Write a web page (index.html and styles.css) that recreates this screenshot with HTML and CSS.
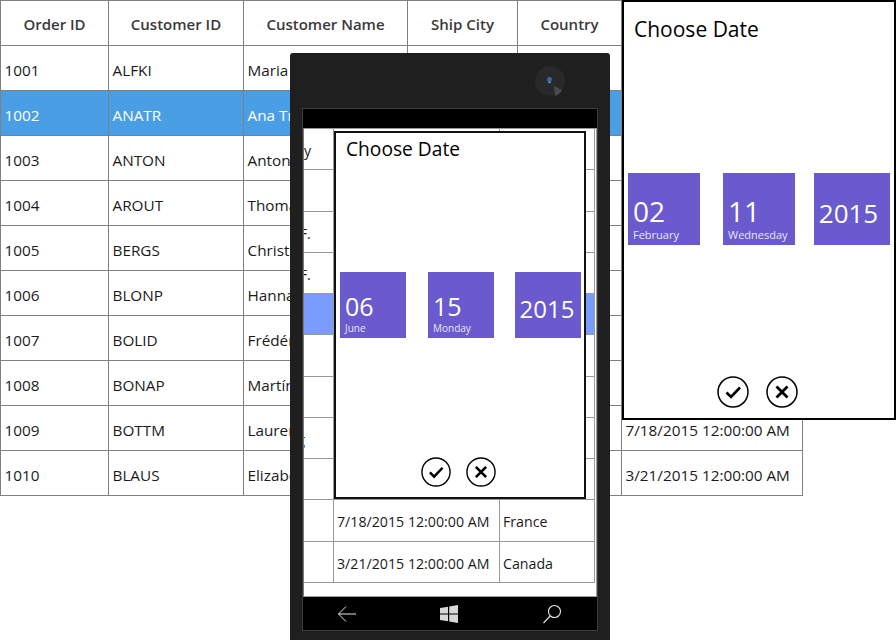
FILE: index.html
```html
<!DOCTYPE html>
<html lang="en">
<head>
<meta charset="utf-8">
<title>Choose Date</title>
<link rel="stylesheet" href="styles.css">
</head>
<body>
<svg class="defs" width="0" height="0" aria-hidden="true">
  <symbol id="ok" viewBox="0 0 32 32"><circle cx="16" cy="16" r="15" fill="#fff" stroke="#000" stroke-width="1.5"/><path d="M9.5 16.5 14 21 23 11.5" fill="none" stroke="#000" stroke-width="2.6"/></symbol>
  <symbol id="no" viewBox="0 0 32 32"><circle cx="16" cy="16" r="15" fill="#fff" stroke="#000" stroke-width="1.5"/><path d="M10.5 10.5 21.5 21.5M21.5 10.5 10.5 21.5" fill="none" stroke="#000" stroke-width="2.8"/></symbol>
</svg>

<main class="grid">
  <div class="row head"><div class="cell">Order ID</div><div class="cell">Customer ID</div><div class="cell">Customer Name</div><div class="cell">Ship City</div><div class="cell">Country</div><div class="cell"></div></div>
  <div class="row"><div class="cell">1001</div><div class="cell">ALFKI</div><div class="cell">Maria Anders</div><div class="cell"></div><div class="cell"></div><div class="cell"></div></div>
  <div class="row selected"><div class="cell">1002</div><div class="cell">ANATR</div><div class="cell">Ana Trujillo</div><div class="cell"></div><div class="cell"></div><div class="cell"></div></div>
  <div class="row"><div class="cell">1003</div><div class="cell">ANTON</div><div class="cell">Antonio Moreno</div><div class="cell"></div><div class="cell"></div><div class="cell"></div></div>
  <div class="row"><div class="cell">1004</div><div class="cell">AROUT</div><div class="cell">Thomas Hardy</div><div class="cell"></div><div class="cell"></div><div class="cell"></div></div>
  <div class="row"><div class="cell">1005</div><div class="cell">BERGS</div><div class="cell">Christina Berglund</div><div class="cell"></div><div class="cell"></div><div class="cell"></div></div>
  <div class="row"><div class="cell">1006</div><div class="cell">BLONP</div><div class="cell">Hanna Moos</div><div class="cell"></div><div class="cell"></div><div class="cell"></div></div>
  <div class="row"><div class="cell">1007</div><div class="cell">BOLID</div><div class="cell">Frédérique Citeaux</div><div class="cell"></div><div class="cell"></div><div class="cell"></div></div>
  <div class="row"><div class="cell">1008</div><div class="cell">BONAP</div><div class="cell">Martín Sommer</div><div class="cell"></div><div class="cell"></div><div class="cell"></div></div>
  <div class="row"><div class="cell">1009</div><div class="cell">BOTTM</div><div class="cell">Laurence Lebihan</div><div class="cell"></div><div class="cell"></div><div class="cell">7/18/2015 12:00:00 AM</div></div>
  <div class="row"><div class="cell">1010</div><div class="cell">BLAUS</div><div class="cell">Elizabeth Lincoln</div><div class="cell"></div><div class="cell"></div><div class="cell">3/21/2015 12:00:00 AM</div></div>
</main>

<aside class="phone">
  <div class="bezel">
    <svg class="camera" width="32" height="32" viewBox="0 0 32 32" aria-hidden="true">
      <circle cx="16" cy="16" r="15" fill="#29292c"/>
      <path d="M28 25 20 21 21 31C24 30 27 28 28 25Z" fill="#4a4a4e"/>
      <circle cx="15.5" cy="14.5" r="2.4" fill="#4a62a8"/>
      <rect x="14" y="16.6" width="3" height="1.5" fill="#1aa6a6"/>
    </svg>
  </div>
  <div class="screen">
    <div class="status"></div>
    <div class="viewport">
      <div class="pgrid">
        <div class="prow phead"><div class="pcell">Ship City</div><div class="pcell"></div><div class="pcell"></div></div>
        <div class="prow"><div class="pcell">Berlin</div><div class="pcell"></div><div class="pcell"></div></div>
        <div class="prow"><div class="pcell">México D.F.</div><div class="pcell"></div><div class="pcell"></div></div>
        <div class="prow"><div class="pcell">México D.F.</div><div class="pcell"></div><div class="pcell"></div></div>
        <div class="prow pselected"><div class="pcell">London</div><div class="pcell"></div><div class="pcell"></div></div>
        <div class="prow"><div class="pcell">Luleå</div><div class="pcell"></div><div class="pcell"></div></div>
        <div class="prow"><div class="pcell tight">Mannheim</div><div class="pcell"></div><div class="pcell"></div></div>
        <div class="prow"><div class="pcell tight">Strasbourg</div><div class="pcell"></div><div class="pcell"></div></div>
        <div class="prow"><div class="pcell">Madrid</div><div class="pcell"></div><div class="pcell"></div></div>
        <div class="prow"><div class="pcell">Marseille</div><div class="pcell">7/18/2015 12:00:00 AM</div><div class="pcell">France</div></div>
        <div class="prow"><div class="pcell">Montréal</div><div class="pcell">3/21/2015 12:00:00 AM</div><div class="pcell">Canada</div></div>
      </div>
    </div>
    <nav class="navbar">
      <svg width="20" height="20" viewBox="0 0 20 20" aria-hidden="true"><path d="M19 10H1.5M9 2.5 1.5 10 9 17.5" fill="none" stroke="#e8e8e8" stroke-width="1"/></svg>
      <svg class="winlogo" width="20" height="20" viewBox="0 0 20 20" aria-hidden="true"><path d="M1 4 9 2.8V9.4H1ZM10.2 2.6 19 1V9.4H10.2ZM1 10.6H9V17.2L1 16ZM10.2 10.6H19V19L10.2 17.4Z" fill="#d8d8d8"/></svg>
      <svg width="20" height="20" viewBox="0 0 20 20" aria-hidden="true"><circle cx="12.5" cy="7.5" r="6" fill="none" stroke="#e8e8e8" stroke-width="1.1"/><path d="M8.2 12 1.5 19" fill="none" stroke="#e8e8e8" stroke-width="1.1"/></svg>
    </nav>
  </div>
</aside>

<section class="dialog dialog-phone">
  <h2 class="title">Choose Date</h2>
  <div class="tiles">
    <div class="tile"><span class="num">06</span><span class="sub">June</span></div>
    <div class="tile"><span class="num num-day">15</span><span class="sub">Monday</span></div>
    <div class="tile tile-year"><span class="year">2015</span></div>
  </div>
  <div class="actions">
    <svg class="act"><use href="#ok"/></svg>
    <svg class="act"><use href="#no"/></svg>
  </div>
</section>

<section class="dialog dialog-desk">
  <h2 class="title">Choose Date</h2>
  <div class="tiles">
    <div class="tile"><span class="num">02</span><span class="sub">February</span></div>
    <div class="tile"><span class="num num-day">11</span><span class="sub">Wednesday</span></div>
    <div class="tile tile-year"><span class="year">2015</span></div>
  </div>
  <div class="actions">
    <svg class="act"><use href="#ok"/></svg>
    <svg class="act"><use href="#no"/></svg>
  </div>
</section>
</body>
</html>
```
FILE: styles.css
```css
* { box-sizing: border-box; }
html, body { margin: 0; height: 640px; overflow: hidden; background: #fff; }
body { position: relative; font-family: "Open Sans", "Noto Sans", sans-serif; color: #1a1a1a; }
.defs { position: absolute; }

/* desktop grid */
.grid { width: 803px; border-left: 1px solid #808080; border-top: 1px solid #808080; }
.row { display: grid; grid-template-columns: 108px 135px 164px 110px 104px 181px; height: 45px; }
.cell { display: flex; align-items: center; padding: 3px 0 0 3.5px; border-right: 1px solid #808080; border-bottom: 1px solid #808080; font-size: 15.3px; white-space: nowrap; overflow: hidden; }
.row.head .cell { justify-content: center; padding: 1px 0 0 0; font-weight: 600; font-size: 15px; color: #3a3a3a; }
.row.selected { background: #4a9fe4; color: #fff; }

/* phone */
.phone { position: absolute; left: 290px; top: 53px; width: 320px; height: 587px; background: #1f1f1f; border-radius: 3px 3px 0 0; padding: 0 12px; display: flex; flex-direction: column; }
.bezel { height: 55px; display: flex; justify-content: flex-end; align-items: center; padding: 0 32px 0 0; flex: none; }
.screen { width: 296px; height: 523px; flex: none; border: 1px solid #3d3d3d; display: flex; flex-direction: column; background: #000; }
.status { height: 19px; flex: none; background: #000; }
.viewport { height: 469px; flex: none; background: #fff; overflow: hidden; border-top: 1px solid #999; border-left: 1px solid #777; border-right: 1px solid #999; border-bottom: 1px solid #999; }
.pgrid { margin-left: -72px; width: 363px; }
.prow { display: grid; grid-template-columns: 102px 166px 95px; height: 41.25px; }
.pcell { display: flex; align-items: center; padding: 3px 0 0 3px; font-size: 14.2px; white-space: nowrap; overflow: hidden; border-right: 1px solid #999; border-bottom: 1px solid #999; }
.pcell.tight { letter-spacing: -.3px; }
.phead .pcell:first-child { justify-content: center; padding-left: 0; }
.pselected { background: #7a9bff; }
.navbar { flex: 1; display: flex; justify-content: space-between; align-items: center; padding: 0 35px 0 34px; background: #000; }
.winlogo { margin-left: -1px; }

/* dialogs */
.dialog { position: absolute; background: #fff; border: 2px solid #000; display: flex; flex-direction: column; color: #000; }
.title { margin: 0; font-weight: 400; }
.tiles { flex: 1; display: grid; align-items: center; }
.tile { background: #6a5acd; color: #fff; display: flex; flex-direction: column; justify-content: flex-end; }
.num, .year { line-height: 1; }
.sub { line-height: 1; opacity: .85; }
.tile-year { justify-content: center; align-items: center; }
.actions { display: flex; justify-content: center; flex: none; }
.act { display: block; }

.dialog-desk { left: 622px; top: 0; width: 274px; height: 420px; }
.dialog-desk .title { font-size: 21px; line-height: 28px; padding: 13px 0 0 10px; }
.dialog-desk .tiles { grid-template-columns: 95px 91px 76px; padding: 0 0 0 4px; margin-bottom: 2px; }
.dialog-desk .tile { width: 72px; height: 72px; padding: 0 0 5px 5px; }
.dialog-desk .tile-year { width: 76px; padding: 8px 7px 0 0; }
.dialog-desk .num { font-size: 28px; margin-bottom: 4px; }
.dialog-desk .sub { font-size: 11px; }
.dialog-desk .year { font-size: 26px; }
.dialog-desk .actions { gap: 17px; padding: 0 3px 10px 0; }
.dialog-desk .act { width: 32px; height: 32px; }

.dialog-phone { left: 334px; top: 131px; width: 252px; height: 368px; border-color: #111; }
.dialog-phone .title { font-size: 19.2px; line-height: 26px; padding: 3px 0 0 10px; }
.dialog-phone .tiles { grid-template-columns: 88px 87px 66px; padding: 0 0 0 4px; margin-bottom: 10px; }
.dialog-phone .tile { width: 66px; height: 66px; padding: 0 0 5px 5px; }
.dialog-phone .tile-year { padding: 9px 2px 0 0; }
.dialog-phone .num { font-size: 25px; margin-bottom: 4px; }
.dialog-phone .sub { font-size: 10px; }
.dialog-phone .year { font-size: 24px; }
.dialog-phone .actions { gap: 15px; padding: 0 3px 10px 0; }
.dialog-phone .act { width: 30px; height: 30px; }
```
